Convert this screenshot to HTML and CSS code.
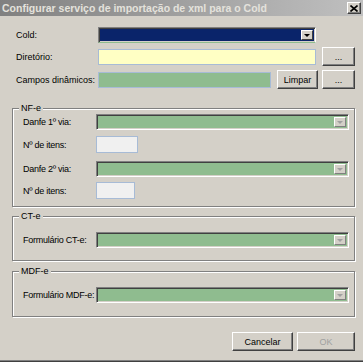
FILE: index.html
```html
<!DOCTYPE html>
<html lang="pt-BR">
<head>
    <meta charset="UTF-8">
    <title>Configurar serviço de importação de xml para o Cold</title>
    <link rel="stylesheet" href="styles.css">
</head>
<body>
    <div class="window">
        <div class="titlebar">
            <span class="title">Configurar serviço de importação de xml para o Cold</span>
            <span class="close">
                <svg width="8" height="7" viewBox="0 0 8 7"><path d="M0.5 0.5 L7.5 6.5 M7.5 0.5 L0.5 6.5" stroke="#000" stroke-width="1.6"/></svg>
            </span>
        </div>

        <div class="content">
            <div class="row row-cold">
                <span class="label">Cold:</span>
                <div class="combo combo-dark w-cold"><span class="arrow"></span></div>
            </div>

            <div class="row row-btn">
                <span class="label">Diretório:</span>
                <div class="input input-yellow w-dir"></div>
                <button class="btn btn-dots">...</button>
            </div>

            <div class="row row-btn">
                <span class="label">Campos dinâmicos:</span>
                <div class="input input-green w-campos"></div>
                <button class="btn btn-limpar">Limpar</button>
                <button class="btn btn-dots">...</button>
            </div>

            <fieldset class="group group-nfe">
                <legend>NF-e</legend>
                <div class="grow first">
                    <span class="glabel">Danfe 1º via:</span>
                    <div class="combo combo-off w-full"><span class="arrow"></span></div>
                </div>
                <div class="grow itens">
                    <span class="glabel">Nº de itens:</span>
                    <div class="input input-light w-itens1"></div>
                </div>
                <div class="grow second">
                    <span class="glabel">Danfe 2º via:</span>
                    <div class="combo combo-off w-full"><span class="arrow"></span></div>
                </div>
                <div class="grow itens2">
                    <span class="glabel">Nº de itens:</span>
                    <div class="input input-light w-itens2"></div>
                </div>
            </fieldset>

            <fieldset class="group group-cte">
                <legend>CT-e</legend>
                <div class="grow single">
                    <span class="glabel">Formulário CT-e:</span>
                    <div class="combo combo-off w-full"><span class="arrow"></span></div>
                </div>
            </fieldset>

            <fieldset class="group group-mdfe">
                <legend>MDF-e</legend>
                <div class="grow single">
                    <span class="glabel">Formulário MDF-e:</span>
                    <div class="combo combo-off w-full"><span class="arrow"></span></div>
                </div>
            </fieldset>

            <div class="footer">
                <button class="btn btn-cancel">Cancelar</button>
                <button class="btn btn-ok" disabled>OK</button>
            </div>
        </div>
    </div>
</body>
</html>
```

FILE: styles.css
```css
* {
    box-sizing: border-box;
}
body {
    margin: 0;
    font-family: "Liberation Sans", Arial, sans-serif;
    font-size: 9px;
    color: #000;
    background: #d4d0c8;
}
.window {
    width: 363px;
    height: 362px;
    background: #d4d0c8;
    box-shadow: inset 0 -1px #404040, inset 0 -2px #808080;
    overflow: hidden;
}
.titlebar {
    height: 16px;
    display: flex;
    align-items: center;
    justify-content: space-between;
    padding: 0 2px 0 2px;
    background: linear-gradient(to right, #808080, #c0c0c0);
}
.title {
    color: #e4e2dc;
    font-weight: bold;
    font-size: 10.5px;
    white-space: nowrap;
}
.close {
    width: 14px;
    height: 12px;
    display: flex;
    align-items: center;
    justify-content: center;
    background: #d4d0c8;
    border: 1px solid;
    border-color: #fff #404040 #404040 #fff;
    box-shadow: inset -1px -1px #808080;
}
.content {
    padding: 0 8px 0 16px;
}
.row {
    display: flex;
    align-items: center;
}
.row-cold {
    height: 16px;
    margin-top: 11px;
}
.row-btn {
    height: 19px;
    margin-top: 4px;
}
.label {
    width: 82px;
    flex: none;
    white-space: nowrap;
}

/* combos */
.combo {
    height: 16px;
    display: flex;
    justify-content: flex-end;
    padding: 2px;
    border: 1px solid;
    border-color: #808080 #fff #fff #808080;
    box-shadow: inset 1px 1px #404040, inset -1px -1px #d4d0c8;
}
.combo .arrow {
    width: 12px;
    height: 100%;
    background: #d4d0c8;
    border: 1px solid;
    border-color: #fff #404040 #404040 #fff;
    display: flex;
    align-items: center;
    justify-content: center;
}
.combo .arrow::after {
    content: "";
    border-left: 3px solid transparent;
    border-right: 3px solid transparent;
    border-top: 3px solid #000;
}
.combo-dark {
    background: #0a246a;
    border-bottom-color: #8fbc8f;
}
.combo-off {
    background: #8fbc8f;
}
.combo-off .arrow {
    border-color: #fff #808080 #808080 #fff;
}
.combo-off .arrow::after {
    border-top-color: #a0a0a0;
}

/* inputs */
.input {
    height: 16px;
    border: 1px solid #a7bbd6;
}
.input-yellow {
    background: #ffffc4;
}
.input-green {
    background: #8fbc8f;
}
.input-light {
    background: #f0f0f0;
    height: 17px;
}

.w-cold { width: 218px; }
.w-dir { width: 218px; }
.w-campos { width: 173px; }
.w-full { width: 254px; }
.w-itens1 { width: 42px; }
.w-itens2 { width: 39px; }

/* buttons */
.btn {
    height: 19px;
    padding: 0;
    font: inherit;
    color: #000;
    background: #d4d0c8;
    border: 1px solid;
    border-color: #fff #404040 #404040 #fff;
    box-shadow: inset -1px -1px #808080;
}
.btn-dots {
    width: 33px;
    margin-left: 6px;
}
.btn-limpar {
    width: 41px;
    margin-left: 6px;
}
.btn-limpar + .btn-dots {
    margin-left: 4px;
}
.btn-cancel {
    width: 61px;
}
.btn-ok {
    width: 58px;
    margin-left: 4px;
    color: #a0a0a0;
}

/* group boxes */
.group {
    margin: 0 0 0 -4px;
    width: 343px;
    min-width: 0;
    padding: 0 5px 0 10px;
    border: 1px solid #808080;
    box-shadow: inset 1px 1px #fff, 1px 1px #fff;
}
.group legend {
    padding: 0 2px;
    margin-left: -4px;
    background: #d4d0c8;
    line-height: 11px;
}
.group-nfe {
    margin-top: 14px;
    padding-bottom: 7px;
}
.group-cte {
    margin-top: 4px;
    padding-top: 10px;
    padding-bottom: 12px;
}
.group-mdfe {
    margin-top: 5px;
    padding-top: 10px;
    padding-bottom: 13px;
}
.grow {
    display: flex;
    align-items: center;
}
.glabel {
    width: 73px;
    flex: none;
    white-space: nowrap;
    letter-spacing: -0.25px;
}
.grow.itens {
    margin-top: 6px;
}
.grow.second {
    margin-top: 8px;
}
.grow.itens2 {
    margin-top: 5px;
}
.footer {
    display: flex;
    justify-content: flex-end;
    margin-top: 15px;
}
```
